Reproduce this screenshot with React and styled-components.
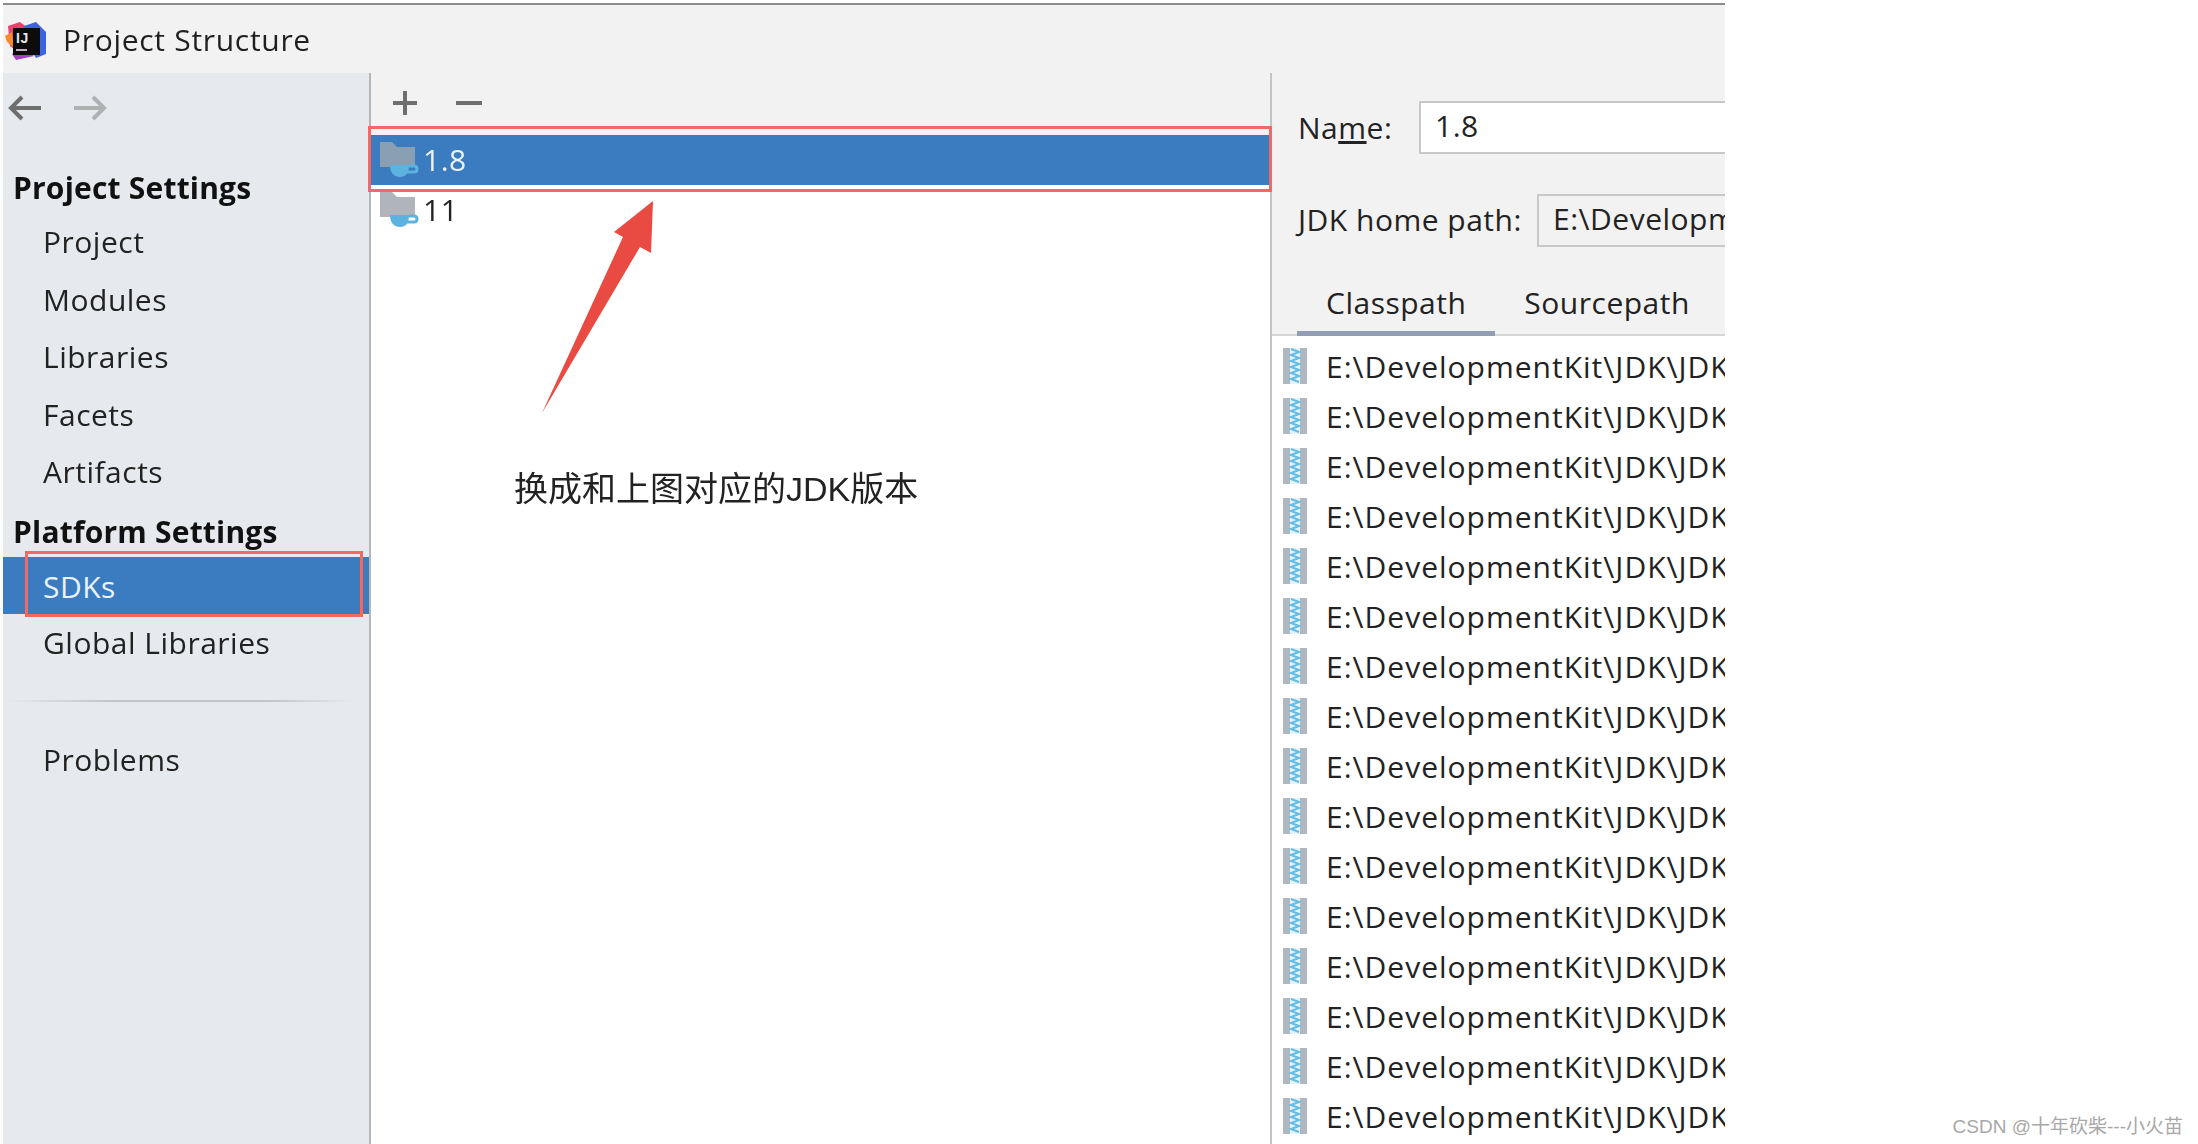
import React from "react";
import styled, { createGlobalStyle } from "styled-components";

const UI_FONT = `"Open Sans", "Noto Sans", sans-serif`;
const JAR_ROWS = Array.from({ length: 16 }, (_, i) => i);
const JAR_PATH = "E:\\DevelopmentKit\\JDK\\JDK1.8\\jre\\lib";

const GlobalStyle = createGlobalStyle`
  html, body {
    margin: 0;
    padding: 0;
    background: #fff;
  }
  * {
    box-sizing: border-box;
  }
  svg {
    flex-shrink: 0;
  }
`;

const LogoIcon = () => (
  <svg width="42" height="42" viewBox="0 0 42 42">
    <path d="M4 8 L16 4 L24 10 L14 34 L6 28 Z" fill="#e8416f" />
    <path d="M1 18 L8 14 L10 30 L3 24 Z" fill="#f58a2e" />
    <path d="M20 8 L32 4 L42 14 L42 36 L32 40 L22 24 Z" fill="#3e63dd" />
    <path d="M8 36 L18 30 L30 38 L12 42 Z" fill="#a43fc0" />
    <rect x="9" y="10" width="27" height="27" fill="#0c0c0c" />
    <rect x="12" y="31" width="11" height="2" fill="#b5b5b5" />
    <text x="12" y="25" fontSize="14" fontWeight="700" fontFamily="Liberation Sans, sans-serif" fill="#e8e8e8">IJ</text>
  </svg>
);

const NavArrow = ({ flip, color }) => (
  <svg width="34" height="28" viewBox="0 0 34 28" style={flip ? { transform: "scaleX(-1)" } : undefined}>
    <path d="M3 14 H33 M14 3 L3 14 L14 25" fill="none" stroke={color} strokeWidth="4" />
  </svg>
);

const PlusIcon = () => (
  <svg width="26" height="26" viewBox="0 0 26 26">
    <path d="M13 1 V25 M1 13 H25" stroke="#6e6e6e" strokeWidth="4" />
  </svg>
);

const MinusIcon = () => (
  <svg width="26" height="26" viewBox="0 0 26 26">
    <path d="M0 13 H26" stroke="#6e6e6e" strokeWidth="4" />
  </svg>
);

const SdkIcon = ({ folder }) => (
  <SdkGlyph width="40" height="38" viewBox="0 0 40 38">
    <path d="M1 1 H13 L18 6 H36 V26 H1 Z" fill={folder} />
    <path d="M11 24 H30 C30 32 27 36 21 36 C15 36 11 32 11 24 Z" fill="#5cb3df" />
    <path d="M30 25 H35 C39 25 39 31 35 31 H28" fill="none" stroke="#5cb3df" strokeWidth="3" />
  </SdkGlyph>
);

const JarIcon = () => (
  <svg width="24" height="36" viewBox="0 0 24 36">
    <rect x="0" y="0" width="7" height="36" fill="#afb8c1" />
    <rect x="17" y="0" width="7" height="36" fill="#afb8c1" />
    <rect x="7" y="0" width="10" height="36" fill="#e4f2fa" />
    <path
      d="M8 1 L16 4 L8 7 L16 10 L8 13 L16 16 L8 19 L16 22 L8 25 L16 28 L8 31 L16 34"
      fill="none"
      stroke="#62bde6"
      strokeWidth="2"
    />
  </svg>
);

const App = () => {
  return (
    <Page>
      <GlobalStyle />
      <Window>
        <TitleBar>
          <LogoIcon />
          <WindowTitle>Project Structure</WindowTitle>
        </TitleBar>
        <Body>
          <Sidebar>
            <NavBar>
              <NavArrow color="#6e6e6e" />
              <NavArrow color="#afb1b3" flip />
            </NavBar>
            <SectionTitle>Project Settings</SectionTitle>
            <NavItem>Project</NavItem>
            <NavItem>Modules</NavItem>
            <NavItem>Libraries</NavItem>
            <NavItem>Facets</NavItem>
            <NavItem>Artifacts</NavItem>
            <SectionTitle $second>Platform Settings</SectionTitle>
            <NavItem $selected>
              SDKs
              <SidebarCallout />
            </NavItem>
            <NavItem>Global Libraries</NavItem>
            <SidebarRule />
            <NavItem>Problems</NavItem>
          </Sidebar>

          <SdkColumn>
            <SdkToolbar>
              <PlusIcon />
              <MinusIcon />
            </SdkToolbar>
            <SdkList>
              <SdkRow $selected>
                <SdkIcon folder="#8b9fb2" />
                1.8
                <ListCallout />
              </SdkRow>
              <SdkRow>
                <SdkIcon folder="#afb5bb" />
                11
              </SdkRow>
              <PointerArrow width="120" height="220" viewBox="0 0 120 220">
                <polygon points="112,1 110,53 99,47 1,213 82,37 73,32" fill="#e94b42" />
              </PointerArrow>
              <Annotation>换成和上图对应的JDK版本</Annotation>
            </SdkList>
          </SdkColumn>

          <DetailPanel>
            <DetailHead>
              <FormRow>
                <FieldLabel $width={121}>
                  Na<u>m</u>e:
                </FieldLabel>
                <NameField>1.8</NameField>
              </FormRow>
              <FormRow>
                <FieldLabel $width={239} $raised>JDK home path:</FieldLabel>
                <PathField>E:\DevelopmentKit\JDK\JDK1.8</PathField>
              </FormRow>
              <TabBar>
                <Tab $active>Classpath</Tab>
                <Tab>Sourcepath</Tab>
              </TabBar>
            </DetailHead>
            <JarList>
              {JAR_ROWS.map((row) => (
                <JarRow key={row}>
                  <JarIcon />
                  <JarText>{JAR_PATH}</JarText>
                </JarRow>
              ))}
            </JarList>
          </DetailPanel>
        </Body>
      </Window>
      <Watermark>CSDN @十年砍柴---小火苗</Watermark>
    </Page>
  );
};

const Page = styled.div`
  position: relative;
  width: 2198px;
  height: 1144px;
  overflow: hidden;
  background: #fff;
  font-family: ${UI_FONT};
  letter-spacing: 0.5px;
`;

const Window = styled.div`
  display: flex;
  flex-direction: column;
  width: 1722px;
  height: 1144px;
  margin-left: 3px;
  padding-top: 3px;
  overflow: hidden;
  filter: blur(0.5px);
`;

const TitleBar = styled.div`
  display: flex;
  align-items: center;
  gap: 17px;
  flex: 0 0 70px;
  padding-left: 1px;
  border-top: 2px solid #8c8c8c;
  background: #f2f2f2;
`;

const WindowTitle = styled.span`
  font-size: 30px;
  letter-spacing: 0.7px;
  color: #1f1f1f;
`;

const Body = styled.div`
  display: flex;
  flex: 1;
  min-height: 0;
`;

const Sidebar = styled.nav`
  flex: 0 0 368px;
  border-right: 2px solid #b4b7ba;
  background: #e6e9ee;
  color: #222;
`;

const NavBar = styled.div`
  display: flex;
  gap: 31px;
  height: 88px;
  padding: 21px 0 0 5px;
`;

const SectionTitle = styled.div`
  display: flex;
  align-items: center;
  height: ${(p) => (p.$second ? "56px" : "52px")};
  padding: ${(p) => (p.$second ? "6px" : "0")} 0 0 10px;
  font-size: 30px;
  font-weight: 700;
  letter-spacing: 0.2px;
  color: #111;
`;

const NavItem = styled.div`
  position: relative;
  display: flex;
  align-items: center;
  height: 57.5px;
  padding-left: 40px;
  padding-top: ${(p) => (p.$selected ? "2px" : "0")};
  font-size: 30px;
  color: ${(p) => (p.$selected ? "#eaf2fa" : "#222")};
  background: ${(p) => (p.$selected ? "#3a7cbf" : "transparent")};
`;

const SidebarCallout = styled.span`
  position: absolute;
  z-index: 1;
  left: 22px;
  right: 6px;
  top: -6px;
  bottom: -3px;
  border: 3px solid #ee6a63;
`;

const SidebarRule = styled.div`
  height: 2px;
  margin: 28px 16px 29px 4px;
  background: linear-gradient(to right, #e6e9ee, #c2c4c7 30%, #c2c4c7 75%, #e6e9ee);
`;

const SdkColumn = styled.section`
  display: flex;
  flex-direction: column;
  flex: 0 0 901px;
  border-right: 2px solid #c4c4c4;
`;

const SdkToolbar = styled.div`
  display: flex;
  align-items: center;
  gap: 38px;
  flex: 0 0 62px;
  padding: 0 0 2px 21px;
  background: #f2f2f2;
`;

const SdkList = styled.div`
  position: relative;
  flex: 1;
  background: #fff;
`;

const SdkRow = styled.div`
  position: relative;
  display: flex;
  align-items: center;
  gap: 4px;
  height: 50px;
  padding: 0 0 2px 8px;
  font-size: 30px;
  color: ${(p) => (p.$selected ? "#eaf2fa" : "#222")};
  background: ${(p) => (p.$selected ? "#3a7cbf" : "#fff")};
`;

const SdkGlyph = styled.svg`
  margin-top: 2px;
`;

const ListCallout = styled.span`
  position: absolute;
  z-index: 1;
  left: -3px;
  right: -2px;
  top: -9px;
  bottom: -7px;
  border: 3px solid #ee6a63;
`;

const PointerArrow = styled.svg`
  position: absolute;
  left: 170px;
  top: 65px;
`;

const Annotation = styled.span`
  position: absolute;
  left: 143px;
  top: 327px;
  font-family: "Liberation Sans", "Noto Sans CJK SC", sans-serif;
  font-size: 34px;
  letter-spacing: 0;
  white-space: nowrap;
  color: #222;
`;

const DetailPanel = styled.section`
  display: flex;
  flex-direction: column;
  flex: 1;
  min-width: 0;
`;

const DetailHead = styled.div`
  display: flex;
  flex-direction: column;
  gap: 40px;
  padding-top: 28px;
  background: #f2f2f2;
`;

const FormRow = styled.div`
  display: flex;
  align-items: center;
  height: 53px;
  padding-left: 26px;
  white-space: nowrap;
`;

const FieldLabel = styled.label`
  flex: 0 0 ${(p) => p.$width}px;
  padding-bottom: ${(p) => (p.$raised ? "2px" : "0")};
  font-size: 30px;
  color: #222;
`;

const NameField = styled.div`
  flex: 1;
  height: 53px;
  padding-left: 14px;
  border: 2px solid #c8c8c8;
  border-right: 0;
  background: #fff;
  font-size: 30px;
  line-height: 46px;
  color: #222;
`;

const PathField = styled(NameField)`
  overflow: hidden;
  background: #f2f2f2;
`;

const TabBar = styled.div`
  display: flex;
  height: 59px;
  margin-top: -10px;
  padding-left: 25px;
  border-bottom: 2px solid #d6d6d6;
`;

const Tab = styled.div`
  display: flex;
  align-items: center;
  margin-bottom: -2px;
  padding: 0 29px 4px;
  font-size: 30px;
  color: #222;
  border-bottom: 5px solid ${(p) => (p.$active ? "#919eb3" : "transparent")};
`;

const JarList = styled.ul`
  flex: 1;
  margin: 0;
  padding: 5px 0 0 11px;
  list-style: none;
  background: #fff;
`;

const JarRow = styled.li`
  display: flex;
  align-items: center;
  gap: 19px;
  height: 50px;
`;

const JarText = styled.span`
  font-size: 30px;
  letter-spacing: 1px;
  white-space: nowrap;
  color: #222;
`;

const Watermark = styled.span`
  position: absolute;
  right: 15px;
  bottom: 6px;
  font-family: "Liberation Sans", "Noto Sans CJK SC", sans-serif;
  font-size: 19px;
  letter-spacing: 0;
  color: #a8a8a8;
`;

export default App;
